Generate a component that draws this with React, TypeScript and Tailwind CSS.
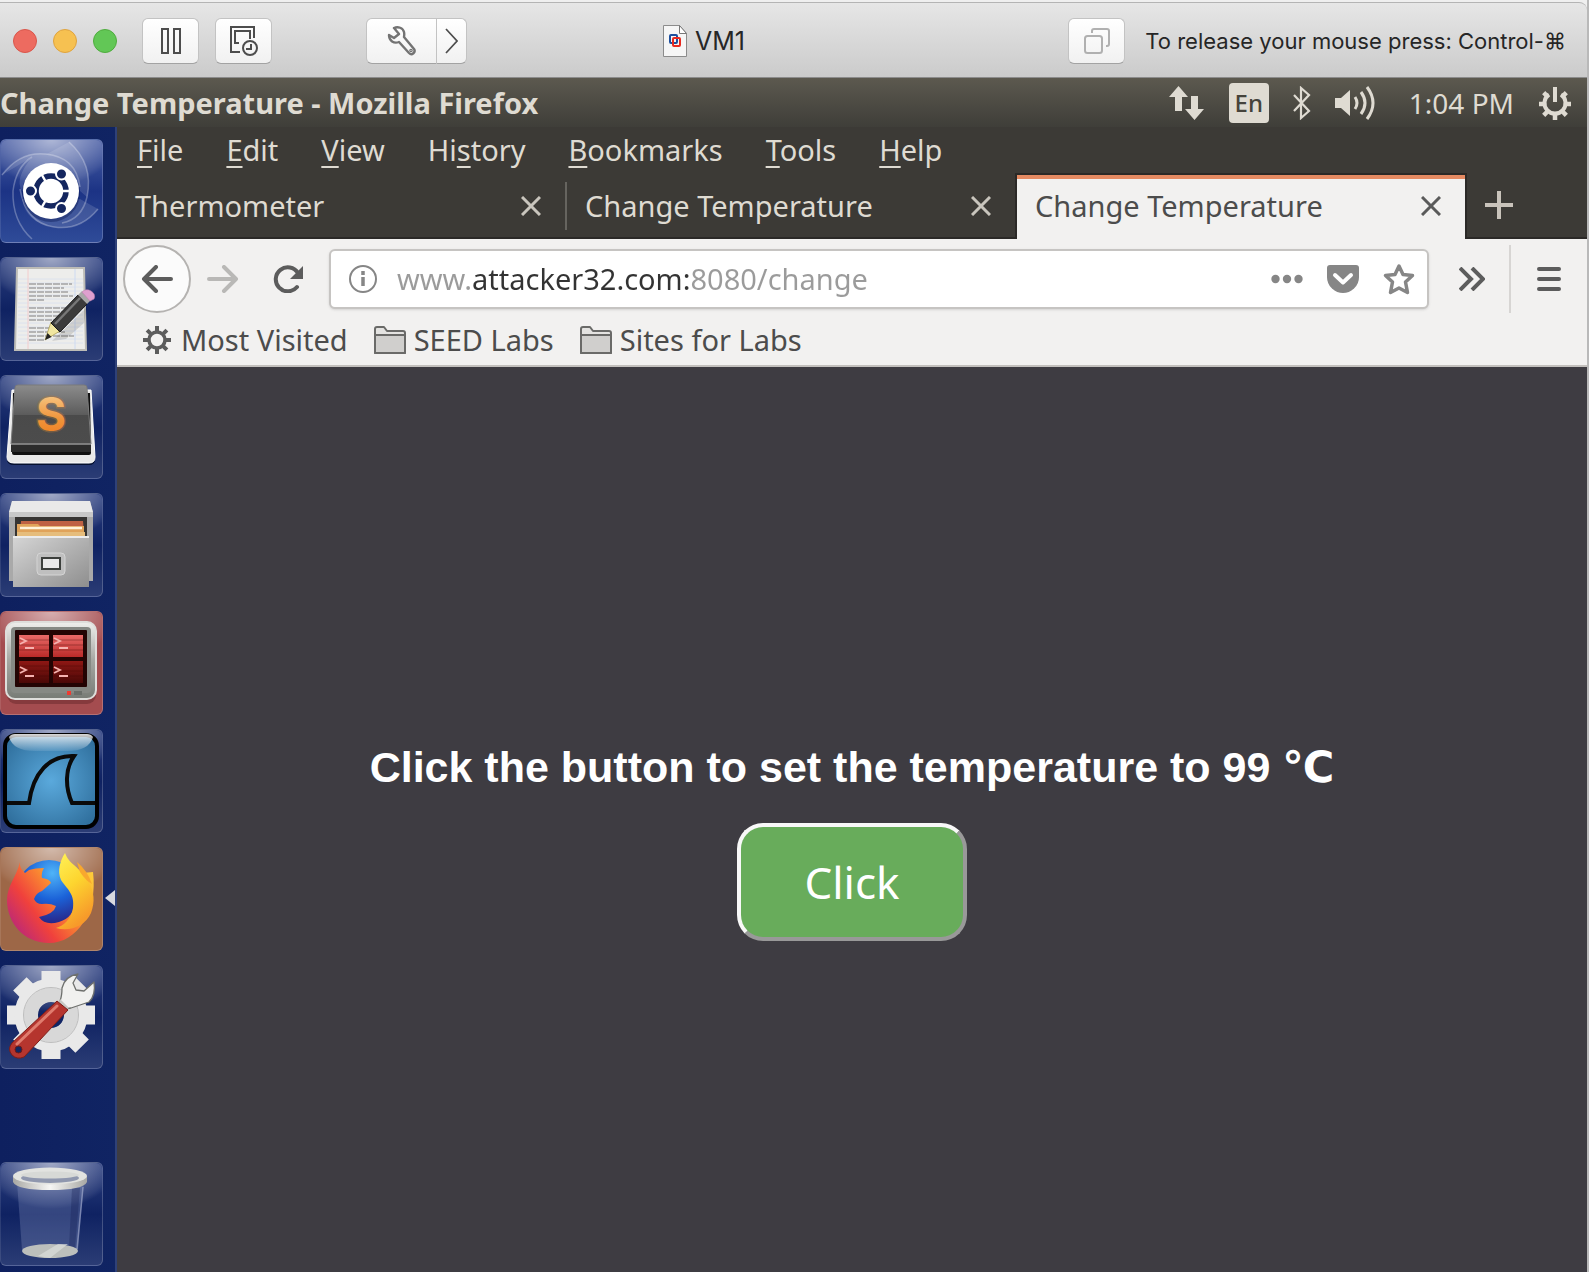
import React from "react";

/* ---------- Host window toolbar ---------- */

function ToolButton({ label, children, className }: { label: string; children: React.ReactNode; className?: string }) {
  return (
    <button
      aria-label={label}
      className={`flex h-[46px] shrink-0 items-center justify-center rounded-md border border-[#c3c3c3] border-b-[#a3a3a3] bg-gradient-to-b from-white to-[#f1f1f1] ${className ?? "w-[57px]"}`}
    >
      {children}
    </button>
  );
}

function HostBar() {
  return (
    <header className="bg-[#efefef] pt-0.5">
      <div className="flex h-19 items-center rounded-tr-lg border-t border-b border-t-[#b4b4b4] border-b-[#8c8c8c] bg-gradient-to-b from-[#e6e6e6] to-[#cbcbcb] pt-0.5 font-['Inter',sans-serif] text-[#262626]">
        <div className="flex items-center pl-[13px]">
          <div className="flex gap-4">
            <button aria-label="Close window" className="size-6 rounded-full border border-[#d9564b] bg-[#ed6b60]" />
            <button aria-label="Minimize window" className="size-6 rounded-full border border-[#dfa33f] bg-[#f6c151]" />
            <button aria-label="Zoom window" className="size-6 rounded-full border border-[#4fac3e] bg-[#62c756]" />
          </div>
          <div className="ml-[25px] flex gap-4">
            <ToolButton label="Pause">
              <svg width="20" height="26" viewBox="0 0 20 26" fill="none" stroke="#4d4d4d" strokeWidth="2">
                <rect x="1" y="1" width="6" height="24" />
                <rect x="13" y="1" width="6" height="24" />
              </svg>
            </ToolButton>
            <ToolButton label="Snapshots">
              <svg width="30" height="32" viewBox="0 0 30 32" fill="none" stroke="#4d4d4d" strokeWidth="2">
                <path d="M11 27H2V2h23v11" />
                <path d="M10 18H6V6h15v8" />
                <circle cx="21" cy="23" r="7" />
                <path d="M22 19v5h-5" />
              </svg>
            </ToolButton>
          </div>
          <div className="ml-[94px] flex">
            <ToolButton label="Settings" className="w-[71px] rounded-r-none">
              <svg width="30" height="32" viewBox="0 0 30 32" fill="none" stroke="#737373" strokeWidth="2.4" strokeLinejoin="round">
                <path d="M7 3c4-2 9 0 10 4 .5 2 .3 3 0 5l10 12c2 3-2 7-5 4L12 17c-5 2-10-1-10-7l5 3 5-4z" />
                <circle cx="24" cy="25.500" r=".6" />
              </svg>
            </ToolButton>
            <ToolButton label="More settings" className="w-[30px] rounded-l-none border-l-0">
              <svg width="13" height="26" viewBox="0 0 13 26" fill="none" stroke="#4d4d4d" strokeWidth="1.700">
                <path d="M1 1l11 12L1 25" />
              </svg>
            </ToolButton>
          </div>
        </div>
        <div className="ml-[196px] flex items-center gap-2">
          <svg width="24" height="32" viewBox="0 0 24 32">
            <path d="M.5.500h16l7 8v23H.5z" fill="#f6f6f6" stroke="#8c8c8c" />
            <path d="M16.500.500v8h7z" fill="#fff" stroke="#777" />
            <rect x="7" y="10" width="7" height="8" rx="1" fill="none" stroke="#1d4f9e" strokeWidth="2" />
            <rect x="10" y="13" width="7" height="8" rx="1" fill="none" stroke="#e8291f" strokeWidth="2" />
          </svg>
          <h1 className="text-[25px] leading-8">VM1</h1>
        </div>
        <div className="ml-auto flex items-center gap-5 pr-[21px]">
          <ToolButton label="Unity view">
            <svg width="26" height="26" viewBox="0 0 26 26" fill="none" stroke="#b0b0b0" strokeWidth="2">
              <rect x="1" y="8" width="17" height="17" rx="2.500" />
              <path d="M8 5V3q0-2 2-2h13q2 0 2 2v13q0 2-2 2h-1" />
            </svg>
          </ToolButton>
          <p className="text-[22px] leading-8 whitespace-nowrap">To release your mouse press: Control-⌘</p>
        </div>
      </div>
    </header>
  );
}

/* ---------- Desktop panel ---------- */

function gearTeeth(cx: number, cy: number, r1: number, r2: number, skip: number[] = []) {
  return Array.from({ length: 8 }, (_, i) => i)
    .filter((i) => !skip.includes(i))
    .map((i) => {
      const a = (i * Math.PI) / 4 - Math.PI / 2;
      return `M${cx + r1 * Math.cos(a)} ${cy + r1 * Math.sin(a)}L${cx + r2 * Math.cos(a)} ${cy + r2 * Math.sin(a)}`;
    })
    .join("");
}

function DesktopPanel() {
  return (
    <div className="flex h-[49px] items-center justify-between bg-gradient-to-b from-[#5c594f] to-[#3f3e39] pr-[15px] text-[#dfdbd2]">
      <h2 className="text-[29px] leading-8 font-bold">Change Temperature - Mozilla Firefox</h2>
      <div className="flex items-center">
        <svg width="36" height="34" viewBox="0 0 36 34" fill="#dfdbd2">
          <path d="M9.500 0l9.500 11h-6v14H6V11H0z" />
          <path d="M22 10h7v13h6l-9.500 11L16 23h6z" />
        </svg>
        <span className="ml-6 flex h-10 w-10 items-center justify-center rounded-sm bg-[#dfdbd2] text-2xl font-medium text-[#45433c]">En</span>
        <svg className="ml-6" width="18" height="34" viewBox="0 0 18 34" fill="none" stroke="#dfdbd2" strokeWidth="2.200">
          <path d="M1 9l15 16-8 7V2l8 7L1 25" />
        </svg>
        <svg className="ml-6" width="42" height="36" viewBox="0 0 42 36" fill="none" stroke="#dfdbd2" strokeWidth="3">
          <path d="M0 13h6l9-8v26l-9-8H0z" fill="#dfdbd2" stroke="none" />
          <path d="M20 12q4 6 0 12M26 7q8 11 0 22M32 2q12 16 0 32" />
        </svg>
        <time className="ml-8 text-[28px] leading-8 whitespace-nowrap">1:04 PM</time>
        <svg className="ml-6" width="34" height="34" viewBox="0 0 34 34" fill="none" stroke="#dfdbd2">
          <path d="M11 8.500a10.500 10.500 0 1 0 12 0" strokeWidth="4" />
          <path d={gearTeeth(17, 18, 11, 16, [0])} strokeWidth="4.500" />
          <path d="M17 1v15" strokeWidth="4" />
        </svg>
      </div>
    </div>
  );
}

/* ---------- Launcher ---------- */

function Tile({ label, bg, children, running }: { label: string; bg: string; children: React.ReactNode; running?: boolean }) {
  return (
    <button aria-label={label} className={`relative h-[104px] w-[103px] shrink-0 rounded-md border border-white/20 border-l-white/10 ${bg}`}>
      <span className="absolute inset-0 rounded-md bg-[radial-gradient(ellipse_65%_45%_at_50%_0%,rgba(255,255,255,.55),rgba(255,255,255,.08)_90%,transparent)]" />
      <svg className="absolute -top-px -left-px" width="103" height="104" viewBox="0 0 103 104">
        {children}
      </svg>
      {running && (
        <svg className="absolute top-[42px] left-[104px]" width="10" height="16" viewBox="0 0 10 16">
          <path d="M10 0v16L0 8z" fill="#d8dae0" />
        </svg>
      )}
    </button>
  );
}

const plain = "bg-gradient-to-b from-[#2c3f80] via-[#0f2262] to-[#2b3c75]";

function Launcher() {
  return (
    <nav aria-label="Launcher" className="flex w-[117px] shrink-0 flex-col gap-[14px] border-r-2 border-[#2f4178] bg-gradient-to-r from-[#0e205f] to-[#102463] pt-3">
      <Tile label="Search your computer" bg="bg-gradient-to-b from-[#4b5fa5] via-[#1c3385] to-[#2f4b98]">
        <g fill="none" stroke="#fff" strokeOpacity=".28" strokeWidth="1.500">
          <path d="M2 36Q20 12 46 15Q76 18 80 48" />
          <path d="M69 3Q94 25 87 58Q82 80 62 84" />
          <path d="M98 70Q80 92 54 88Q26 84 20 50" />
          <path d="M32 100Q12 82 13 52Q16 28 32 18" />
        </g>
        <path d="M2 36Q20 12 46 15Q76 18 80 48L52 52L22 52Q14 40 32 18Z M69 3Q94 25 87 58L80 52Q76 20 45 16Z M98 70Q80 92 54 88Q26 84 22 60L80 60Z" fill="#fff" fillOpacity=".13" />
        <circle cx="51" cy="54" r="29" fill="#0b1a52" fillOpacity=".4" />
        <circle cx="51" cy="52" r="28" fill="#fff" />
        <circle cx="51" cy="52" r="15" fill="none" stroke="#14265f" strokeWidth="5.500" />
        <path d="M51 52L77 52M51 52L38 29M51 52L38 75" stroke="#fff" strokeWidth="2.500" />
        <circle cx="51" cy="52" r="11" fill="#fff" />
        <g fill="#14265f" stroke="#fff" strokeWidth="2">
          <circle cx="30.500" cy="52" r="5.500" />
          <circle cx="61.500" cy="35" r="5.500" />
          <circle cx="61.500" cy="69.500" r="5.500" />
        </g>
      </Tile>

      <Tile label="Text editor" bg={plain}>
        <path d="M17 11h67l2 82H15z" fill="#ededeb" stroke="#bdbcb6" strokeWidth="2" />
        <path d="M18 22h65M18 26h65M18 30h65M18 34h65M18 38h65M18 42h65M18 46h65M18 50h65M18 54h65M18 58h65M18 62h65M18 66h65M18 70h65M18 74h65M18 78h65M18 82h65M18 86h65" stroke="#d8dfee" strokeWidth=".8" />
        <path d="M28 12v80" stroke="#f3cccc" />
        <path d="M75 12v80" stroke="#cddaf2" />
        <path d="M29 27h43M29 31h35M29 35h40M29 39h44M29 43h16M29 51h40M29 55h36M29 59h32M29 63h26M29 71h28M29 75h36M29 79h45M29 83h16" stroke="#a3a3a3" strokeWidth="1.500" strokeDasharray="7 1" />
        <path d="M52 84L87 50L84 66L66 82z" fill="#000" opacity=".12" />
        <path d="M45 83l6-18 9 9z" fill="#f0e6a0" stroke="#a89a4a" strokeWidth=".7" />
        <path d="M45 83l2.500-7 4 4z" fill="#222" />
        <path d="M51 66L78 38l9 9L60 75z" fill="#3b3b3b" stroke="#1b1b1b" />
        <path d="M55 67l25-26" stroke="#777" strokeWidth="2.500" />
        <path d="M78 38l4-4 9 9-4 4z" fill="#a9a9a9" />
        <path d="M82 35q4-4 9-1t3 8l-4 2z" fill="#dfa0cf" stroke="#c182b0" strokeWidth=".6" />
      </Tile>

      <Tile label="Sublime Text" bg={plain}>
        <defs>
          <linearGradient id="keyTop" x1="0" y1="0" x2="0" y2="1"><stop offset="0" stopColor="#8c8c8c" /><stop offset=".5" stopColor="#5c5c5c" /><stop offset=".5" stopColor="#4a4a4a" /><stop offset="1" stopColor="#4c4c4c" /></linearGradient>
          <linearGradient id="orange" x1="0" y1="0" x2="0" y2="1"><stop offset="0" stopColor="#f8d79b" /><stop offset=".6" stopColor="#f09339" /><stop offset="1" stopColor="#ee7a1c" /></linearGradient>
        </defs>
        <path d="M12 17h79l4 67q0 6-6 6H14q-7 0-7-6z" fill="#05102f" />
        <path d="M12 15h79l4 67q0 6-6 6H14q-7 0-7-6z" fill="#e9e9e9" stroke="#fff" />
        <path d="M13 18h77l1 60q0 2-2 2H14q-2 0-2-2z" fill="#111" />
        <path d="M11 69h80v8H11z" fill="#2c2c2c" />
        <path d="M18 10h66q3 0 3 3l4 56H11l4-56q0-3 3-3z" fill="url(#keyTop)" stroke="#7b7b7b" />
        <path d="M11 69h80" stroke="#898989" strokeWidth="1.500" />
        <text x="51" y="56" textAnchor="middle" fontSize="46" fontWeight="700" fontFamily="Inter" fill="url(#orange)" stroke="#b87a3a" strokeOpacity=".4" strokeWidth="3" paintOrder="stroke">S</text>
      </Tile>

      <Tile label="Files" bg={plain}>
        <defs>
          <linearGradient id="cab" x1="0" y1="0" x2="1" y2="1"><stop offset="0" stopColor="#d6d6d6" /><stop offset="1" stopColor="#8e8e8e" /></linearGradient>
        </defs>
        <path d="M12 8h78l3 12v68H9V20z" fill="#a9a9a9" />
        <path d="M12 8h78l3 11H9z" fill="#e9e9e9" />
        <path d="M9 19h84v5H9z" fill="#c8c8c8" />
        <path d="M15 24h72v20H15z" fill="#363432" />
        <path d="M21 28h62l1 12H20z" fill="#bf6244" />
        <path d="M17 31h21l2 2h44v11H17z" fill="#e0a35a" />
        <path d="M20 35h62" stroke="#fff4dc" strokeWidth="2.500" />
        <path d="M17 39h68v5H17z" fill="#e6bd7c" />
        <path d="M13 43h76v51H13z" fill="url(#cab)" />
        <path d="M13 44h76" stroke="#ececec" strokeWidth="2" />
        <rect x="37" y="60" width="28" height="22" rx="4" fill="#bfbfbf" stroke="#d4d4d4" />
        <rect x="42" y="65" width="18" height="11" fill="#e9e9e9" stroke="#3c3f3c" strokeWidth="2" />
      </Tile>

      <Tile label="Terminal" bg="bg-[#a44c4f]">
        <defs>
          <linearGradient id="mon" x1="0" y1="0" x2="0" y2="1"><stop offset="0" stopColor="#efefec" /><stop offset=".5" stopColor="#a5a7a2" /><stop offset="1" stopColor="#777b75" /></linearGradient>
          <linearGradient id="redTop" x1="0" y1="0" x2="0" y2="1"><stop offset="0" stopColor="#e96a68" /><stop offset="1" stopColor="#ba2b29" /></linearGradient>
          <linearGradient id="redLow" x1="0" y1="0" x2="0" y2="1"><stop offset="0" stopColor="#8e1714" /><stop offset="1" stopColor="#4a0806" /></linearGradient>
        </defs>
        <rect x="7" y="14" width="89" height="79" rx="9" fill="#5a2022" opacity=".4" />
        <rect x="6" y="11" width="90" height="77" rx="9" fill="url(#mon)" stroke="#dededb" strokeWidth="2" />
        <rect x="11" y="16" width="80" height="66" rx="4" fill="#868984" />
        <rect x="15" y="19" width="72" height="57" rx="1" fill="#230403" />
        <path d="M19 24h30v22H19zM53 24h30v22H53z" fill="url(#redTop)" />
        <path d="M19 50h30v22H19zM53 50h30v22H53z" fill="url(#redLow)" />
        <path d="M19 29h30M53 29h30M19 34h30M53 34h30M19 39h30M53 39h30M19 55h30M53 55h30M19 60h30M53 60h30M19 65h30M53 65h30" stroke="#3c0504" strokeOpacity=".35" />
        <path d="M20 27l6 3-6 3M25 37h9M54 27l6 3-6 3M59 37h9M20 56l6 3-6 3M25 65h9M54 56l6 3-6 3M59 65h9" fill="none" stroke="#f6b3b0" strokeWidth="1.800" />
        <rect x="67" y="80" width="4" height="4" fill="#ef3b31" />
        <path d="M74 80h8v4h-8z" fill="#6a6e69" />
      </Tile>

      <Tile label="Wireshark" bg={plain}>
        <defs>
          <radialGradient id="sea" cx=".5" cy=".5" r=".6"><stop offset="0" stopColor="#5aa9dc" /><stop offset="1" stopColor="#31719f" /></radialGradient>
          <linearGradient id="gloss" x1="0" y1="0" x2="0" y2="1"><stop offset="0" stopColor="#fff" stopOpacity=".85" /><stop offset="1" stopColor="#fff" stopOpacity=".1" /></linearGradient>
        </defs>
        <rect x="5" y="6" width="92" height="92" rx="11" fill="url(#sea)" stroke="#000" strokeWidth="4" />
        <path d="M9 8q2-3 6-3h72q4 0 6 3-4 14-26 14H35Q13 22 9 8z" fill="url(#gloss)" />
        <path d="M7 74h22C33 44 49 26 74 27C65 40 65 58 72 74H95" fill="none" stroke="#0a0a0a" strokeWidth="4" />
      </Tile>

      <Tile label="Firefox" bg="bg-[#9d6747]" running>
        <defs>
          <linearGradient id="fox" x1="1" y1=".1" x2="0" y2=".8"><stop offset="0" stopColor="#ffd23a" /><stop offset=".4" stopColor="#fb9130" /><stop offset=".7" stopColor="#f0413c" /><stop offset="1" stopColor="#b5257f" /></linearGradient>
          <radialGradient id="globe" cx=".55" cy=".2" r=".8"><stop offset="0" stopColor="#4fb4f8" /><stop offset=".5" stopColor="#1b62d8" /><stop offset="1" stopColor="#2a1f80" /></radialGradient>
          <linearGradient id="tail" x1="0" y1="0" x2=".4" y2="1"><stop offset="0" stopColor="#fff35a" /><stop offset=".5" stopColor="#fdd52f" /><stop offset="1" stopColor="#f79a2a" /></linearGradient>
        </defs>
        <circle cx="49" cy="46" r="33" fill="url(#globe)" />
        <path d="M20 15q-1 6 5 11l4-3q6-2 15-2-3 5-2 10 8 1 9 5l-9 8q-6 2-8 8 2 5 8 5 8-1 14 2-2 8-17 11 6 9 20 5 16-5 16-22 0-12-4-26l22-2c5 40-16 71-44 71C24 96 7 76 7 53c0-14 9-22 13-38z" fill="url(#fox)" />
        <path d="M65 6c-5 8-8 18-4 27 6 9 14 14 12 28-2 12-10 18-17 20 14 4 29-2 35-15 9-23-7-39-17-48-7-6-7-8-9-12z" fill="url(#tail)" />
        <path d="M77 15q10 8 15 22-6-3-12-12z" fill="#f8a82e" />
      </Tile>

      <Tile label="System settings" bg={plain}>
        <path d={gearTeeth(51, 50, 30, 44)} stroke="#e9e9e9" strokeWidth="19" />
        <circle cx="51" cy="50" r="25" fill="none" stroke="#e9e9e9" strokeWidth="23" />
        <circle cx="51" cy="50" r="20" fill="none" stroke="#d8d8d8" strokeWidth="14" />
        <circle cx="51" cy="50" r="27.500" fill="none" stroke="#bdbdbd" />
        <path d="M60 39L64 44L71 43L89 37Q96 30 94 17L84 26L76 25L73 18L78 9Q65 11 62 23Q62 31 60 36Z" fill="#f1f1ef" stroke="#6e706d" strokeWidth="1.300" strokeLinejoin="round" />
        <path d="M60 34l9 9-7 4-5-5z" fill="#c7c8c4" />
        <path d="M57 36l11 9-44 47q-7 3-12-2-5-6 0-12z" fill="#b5352e" stroke="#7d1d18" />
        <path d="M57 41L17 79" stroke="#e07c6e" strokeWidth="3" strokeLinecap="round" />
        <circle cx="18.500" cy="84.500" r="3.500" fill="#14265f" stroke="#701a16" />
      </Tile>

      <div className="mt-auto pb-px">
        <Tile label="Trash" bg={plain}>
          <defs>
            <linearGradient id="rim" x1="0" y1="0" x2="1" y2="0"><stop offset="0" stopColor="#a8a8a4" /><stop offset=".5" stopColor="#f6f6f4" /><stop offset="1" stopColor="#a8a8a4" /></linearGradient>
          </defs>
          <path d="M17 20h67l-6 68q-27 14-56 0z" fill="#8b97c4" fillOpacity=".3" />
          <path d="M72 26h8l-5 60h-6z" fill="#0f1c50" fillOpacity=".3" />
          <path d="M83 25l-6 62" stroke="#a6afd0" strokeOpacity=".6" strokeWidth="1.500" />
          <ellipse cx="50" cy="89" rx="28" ry="7" fill="#bcbfbc" />
          <path d="M38 94l20-12h10L50 96z" fill="#dcdedb" opacity=".7" />
          <path d="M13 14v6q4 8 37 8t37-8v-6z" fill="url(#rim)" />
          <ellipse cx="50" cy="14" rx="37" ry="8.500" fill="#e2e3e0" />
          <ellipse cx="50" cy="16" rx="29" ry="5" fill="#8f97ae" />
          <ellipse cx="50" cy="13" rx="29" ry="3.500" fill="#d7d9d6" />
        </Tile>
      </div>
    </nav>
  );
}

/* ---------- Browser ---------- */

const menus: [string, string, string][] = [
  ["", "F", "ile"],
  ["", "E", "dit"],
  ["", "V", "iew"],
  ["Hi", "s", "tory"],
  ["", "B", "ookmarks"],
  ["", "T", "ools"],
  ["", "H", "elp"],
];

function MenuBar() {
  return (
    <div role="menubar" className="flex h-[46px] items-center gap-[43px] pl-5">
      {menus.map(([a, b, c]) => (
        <button key={b + c} role="menuitem" className="leading-8">
          {a}
          <span className="underline decoration-2 underline-offset-[5px]">{b}</span>
          {c}
        </button>
      ))}
    </div>
  );
}

function Tab({ title, state }: { title: string; state: "divided" | "idle" | "active" }) {
  const active = state === "active";
  return (
    <div
      className={
        active
          ? "flex w-[452px] items-center justify-between border-x-2 border-t-2 border-[#2b2927] bg-[#f2f1f0] pr-6 pb-0.5 pl-[18px] text-[#4c4c4c] shadow-[inset_0_4px_0_#e58a62]"
          : "flex w-[450px] items-center justify-between border-b-2 border-[#2b2927] pt-0.5 pr-[26px] pl-[18px]"
      }
    >
      <button role="tab" aria-selected={active} className="leading-8 whitespace-nowrap">
        {title}
      </button>
      <div className="flex items-center gap-6">
        <button aria-label={`Close ${title}`}>
          <svg width="20" height="20" viewBox="0 0 20 20" stroke={active ? "#5a5a5a" : "#c9c5bd"} strokeWidth="3">
            <path d="M1 1l18 18M19 1L1 19" />
          </svg>
        </button>
        {state === "divided" && <span className="-mr-[26px] h-12 w-0.5 bg-[#66645f]" />}
      </div>
    </div>
  );
}

function TabStrip() {
  return (
    <div role="tablist" className="flex h-[66px]">
      <Tab title="Thermometer" state="divided" />
      <Tab title="Change Temperature" state="idle" />
      <div className="-ml-0.5 flex">
        <Tab title="Change Temperature" state="active" />
      </div>
      <div className="flex flex-1 items-center border-b-2 border-[#2b2927] pl-[18px]">
        <button aria-label="New tab">
          <svg width="28" height="28" viewBox="0 0 28 28" stroke="#c9c3bb" strokeWidth="4">
            <path d="M14 0v28M0 14h28" />
          </svg>
        </button>
      </div>
    </div>
  );
}

function NavBar() {
  return (
    <div className="flex h-20 items-center pr-[26px] pl-1.5">
      <button aria-label="Back" className="flex size-[68px] shrink-0 items-center justify-center rounded-full border-2 border-[#b5b3b1] bg-[#fbfbfb]">
        <svg width="32" height="28" viewBox="0 0 32 28" fill="none" stroke="#5c5c5c" strokeWidth="4" strokeLinecap="round" strokeLinejoin="round">
          <path d="M30 14H3M15 2L3 14l12 12" />
        </svg>
      </button>
      <button aria-label="Forward" className="ml-4">
        <svg width="32" height="28" viewBox="0 0 32 28" fill="none" stroke="#b9b8b6" strokeWidth="4" strokeLinecap="round" strokeLinejoin="round">
          <path d="M2 14h27M17 2l12 12-12 12" />
        </svg>
      </button>
      <button aria-label="Reload" className="ml-[34px]">
        <svg width="30" height="28" viewBox="0 0 30 28" fill="none" stroke="#5c5c5c" strokeWidth="4">
          <path d="M25 8A12 12 0 1 0 24 22" strokeLinecap="round" />
          <path d="M30 1v13H17z" fill="#5c5c5c" stroke="none" />
        </svg>
      </button>
      <div className="ml-[26px] flex h-[60px] min-w-0 flex-1 items-center rounded-md border-2 border-[#c6c4c2] bg-white pr-3 pl-[18px] shadow-sm">
        <button aria-label="Site information" className="shrink-0">
          <svg width="28" height="28" viewBox="0 0 28 28" fill="none" stroke="#868686" strokeWidth="2">
            <circle cx="14" cy="14" r="13" />
            <path d="M14 12v9M14 6v4" strokeWidth="3.500" />
          </svg>
        </button>
        <input
          aria-label="Address"
          defaultValue="www.attacker32.com:8080/change"
          className="ml-5 min-w-0 flex-1 bg-[linear-gradient(90deg,#9b9b9b_0_76px,#333_76px_294px,#9b9b9b_294px)] bg-clip-text leading-10 text-transparent caret-black outline-none"
        />
        <div className="flex shrink-0 items-center gap-6">
          <button aria-label="Page actions">
            <svg width="32" height="10" viewBox="0 0 32 10" fill="#868686">
              <circle cx="4.500" cy="5" r="4.200" />
              <circle cx="16" cy="5" r="4.200" />
              <circle cx="27.500" cy="5" r="4.200" />
            </svg>
          </button>
          <button aria-label="Save to Pocket">
            <svg width="32" height="28" viewBox="0 0 32 28">
              <path d="M3 0h26q3 0 3 3v9q0 7-5 11.500T16 28t-11-4.500T0 12V3q0-3 3-3z" fill="#868686" />
              <path d="M8 10l8 7.500 8-7.500" fill="none" stroke="#fff" strokeWidth="4" strokeLinecap="round" strokeLinejoin="round" />
            </svg>
          </button>
          <button aria-label="Bookmark this page">
            <svg width="32" height="32" viewBox="0 0 32 32" fill="none" stroke="#868686" strokeWidth="3.500" strokeLinejoin="round">
              <path d="M16 3l4 8.500 9.500 1-7 6.500 2 10.500L16 25l-8.500 4.500 2-10.500-7-6.500 9.500-1z" />
            </svg>
          </button>
        </div>
      </div>
      <button aria-label="More tools" className="ml-[30px]">
        <svg width="26" height="24" viewBox="0 0 26 24" fill="none" stroke="#5c5c5c" strokeWidth="4">
          <path d="M1 1l11 11L1 23M13 1l11 11-11 11" />
        </svg>
      </button>
      <span className="ml-6 h-[68px] w-0.5 bg-[#d7d5d3]" />
      <button aria-label="Open menu" className="ml-[26px]">
        <svg width="24" height="24" viewBox="0 0 24 24" stroke="#5c5c5c" strokeWidth="4" strokeLinecap="round">
          <path d="M2 2h20M2 12h20M2 22h20" />
        </svg>
      </button>
    </div>
  );
}

function FolderIcon() {
  return (
    <svg width="32" height="28" viewBox="0 0 32 28" stroke="#6a6a68" strokeWidth="2" strokeLinejoin="round">
      <path d="M1 27V3q0-2 2-2h7l3 4h16q2 0 2 2v20z" fill="#e4e3e1" />
      <path d="M1 9h30v18H1z" fill="#d0cfcd" />
    </svg>
  );
}

function BookmarksBar() {
  return (
    <div className="flex h-12 items-center gap-[26px] border-b-2 border-[#c3c0bd] pb-1 pl-[26px]">
      <a href="#most-visited" className="flex items-center gap-2.5">
        <svg width="28" height="28" viewBox="0 0 28 28" fill="none" stroke="#5c5c5c">
          <circle cx="14" cy="14" r="8" strokeWidth="3.500" />
          <path d={gearTeeth(14, 14, 9, 14)} strokeWidth="4" />
        </svg>
        <span className="leading-8">Most Visited</span>
      </a>
      <a href="#seed-labs" className="flex items-center gap-2">
        <FolderIcon />
        <span className="leading-8">SEED Labs</span>
      </a>
      <a href="#sites-for-labs" className="flex items-center gap-2">
        <FolderIcon />
        <span className="leading-8">Sites for Labs</span>
      </a>
    </div>
  );
}

function Page() {
  return (
    <main className="flex flex-1 flex-col items-center justify-center bg-[#3e3c42] pt-11 text-white">
      <h3 className="font-['Liberation_Sans','DejaVu_Sans',sans-serif] text-[43px] leading-12 font-bold">
        Click the button to set the temperature to 99 ℃
      </h3>
      <button className="mt-8 h-[118px] w-[230px] rounded-[26px] border-4 border-t-[#f8f8f8] border-r-[#999] border-b-[#999] border-l-[#f8f8f8] bg-[#68ac5b] text-[44px]">
        Click
      </button>
    </main>
  );
}

export default function App() {
  return (
    <div className="flex min-h-screen flex-col border-r-2 border-[#b9b9b9] font-['Noto_Sans',sans-serif]">
      <HostBar />
      <DesktopPanel />
      <div className="flex flex-1">
        <Launcher />
        <section aria-label="Firefox" className="flex min-w-0 flex-1 flex-col text-[29px]">
          <div className="bg-[#3c3a36] text-[#dfdbd2]">
            <MenuBar />
            <TabStrip />
          </div>
          <div className="bg-[#f2f1f0] text-[#4c4c4c]">
            <NavBar />
            <BookmarksBar />
          </div>
          <Page />
        </section>
      </div>
    </div>
  );
}
